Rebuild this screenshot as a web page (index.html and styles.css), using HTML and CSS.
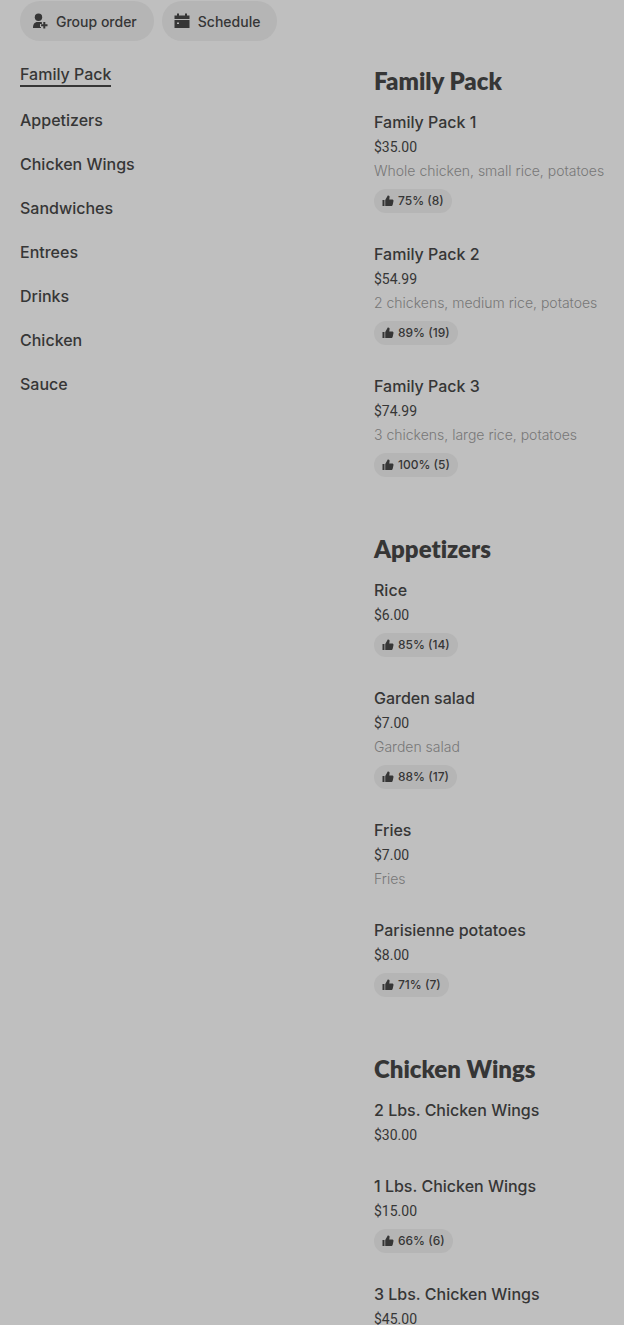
FILE: index.html
```html
<!DOCTYPE html>
<html lang="en">
<head>
  <meta charset="UTF-8" />
  <meta name="viewport" content="width=device-width, initial-scale=1.0"/>
  <title>Menu</title>
  <link rel="stylesheet" href="styles.css">
</head>
<body>
  <svg class="sprite" aria-hidden="true">
    <symbol id="thumb" viewBox="0 0 24 24">
      <path d="M1 10h4v12H1zM6.500 22V10l5-9h1c2 0 3 1.500 2.600 3.500L14.500 9H20c2 0 3 1 3 3l-1.500 7c-.5 2-1.500 3-3.500 3z"/>
    </symbol>
  </svg>

  <div class="page">
    <div class="actions">
      <button type="button" class="pill">
        <svg class="icon" viewBox="0 0 16 16" aria-hidden="true">
          <circle cx="6.500" cy="4.200" r="3.700"/>
          <path d="M1 15c0-3.800 1.500-6 4.500-6h3c.6 0 1 .1 1.400.3V11H8v3h1v1zM11.300 9h2v2.200h2.200v2h-2.200v2.200h-2v-2.200H9.100v-2h2.200z"/>
        </svg>
        Group order
      </button>
      <button type="button" class="pill">
        <svg class="icon" viewBox="0 0 16 16" aria-hidden="true">
          <path d="M3 .5h2v2h6v-2h2v2h2.500V6H.5V2.500H3zM.5 7h15v8H.5zM3 9.500v1.500h2V9.500z" fill-rule="evenodd"/>
        </svg>
        Schedule
      </button>
    </div>

    <div class="columns">
      <nav class="categories">
        <a href="#family-pack" class="active">Family Pack</a>
        <a href="#appetizers">Appetizers</a>
        <a href="#chicken-wings">Chicken Wings</a>
        <a href="#sandwiches">Sandwiches</a>
        <a href="#entrees">Entrees</a>
        <a href="#drinks">Drinks</a>
        <a href="#chicken">Chicken</a>
        <a href="#sauce">Sauce</a>
      </nav>

      <main class="menu">
        <section id="family-pack">
          <h2>Family Pack</h2>
          <div class="item">
            <h3>Family Pack 1</h3>
            <p class="price">$35.00</p>
            <p class="desc">Whole chicken, small rice, potatoes</p>
            <span class="badge"><svg><use href="#thumb"/></svg>75% (8)</span>
          </div>
          <div class="item">
            <h3>Family Pack 2</h3>
            <p class="price">$54.99</p>
            <p class="desc">2 chickens, medium rice, potatoes</p>
            <span class="badge"><svg><use href="#thumb"/></svg>89% (19)</span>
          </div>
          <div class="item">
            <h3>Family Pack 3</h3>
            <p class="price">$74.99</p>
            <p class="desc">3 chickens, large rice, potatoes</p>
            <span class="badge"><svg><use href="#thumb"/></svg>100% (5)</span>
          </div>
        </section>

        <section id="appetizers">
          <h2>Appetizers</h2>
          <div class="item">
            <h3>Rice</h3>
            <p class="price">$6.00</p>
            <span class="badge"><svg><use href="#thumb"/></svg>85% (14)</span>
          </div>
          <div class="item">
            <h3>Garden salad</h3>
            <p class="price">$7.00</p>
            <p class="desc">Garden salad</p>
            <span class="badge"><svg><use href="#thumb"/></svg>88% (17)</span>
          </div>
          <div class="item">
            <h3>Fries</h3>
            <p class="price">$7.00</p>
            <p class="desc">Fries</p>
          </div>
          <div class="item">
            <h3>Parisienne potatoes</h3>
            <p class="price">$8.00</p>
            <span class="badge"><svg><use href="#thumb"/></svg>71% (7)</span>
          </div>
        </section>

        <section id="chicken-wings">
          <h2>Chicken Wings</h2>
          <div class="item">
            <h3>2 Lbs. Chicken Wings</h3>
            <p class="price">$30.00</p>
          </div>
          <div class="item">
            <h3>1 Lbs. Chicken Wings</h3>
            <p class="price">$15.00</p>
            <span class="badge"><svg><use href="#thumb"/></svg>66% (6)</span>
          </div>
          <div class="item">
            <h3>3 Lbs. Chicken Wings</h3>
            <p class="price">$45.00</p>
          </div>
        </section>
      </main>
    </div>
  </div>
</body>
</html>
```
FILE: styles.css
```css
* {
  box-sizing: border-box;
}
body {
  margin: 0;
  background: #bfbfbf;
  color: #363636;
  font-family: Inter, "Liberation Sans", sans-serif;
}
h2, h3, p {
  margin: 0;
}
.sprite {
  display: none;
}
.page {
  height: 100vh;
  overflow: hidden;
  padding: 1px 20px 0;
}
.actions {
  display: flex;
  gap: 8px;
}
.pill {
  display: flex;
  align-items: center;
  gap: 8px;
  height: 40px;
  padding: 0 17px 0 12px;
  border: 0;
  border-radius: 20px;
  background: #b5b5b5;
  color: inherit;
  font-family: inherit;
  font-size: 14px;
  font-weight: 500;
}
.icon {
  width: 16px;
  height: 16px;
  fill: #363636;
}
.columns {
  display: grid;
  grid-template-columns: 1fr 230px;
  padding-top: 24px;
}
.categories {
  display: flex;
  flex-direction: column;
  align-items: flex-start;
  gap: 22px;
}
.categories a {
  color: inherit;
  text-decoration: none;
  font-size: 16px;
  font-weight: 500;
  line-height: 22px;
}
.categories .active {
  padding-bottom: 2px;
  line-height: 18px;
  border-bottom: 2px solid #363636;
}
.menu h2 {
  margin-bottom: 14px;
  font-family: Lato, sans-serif;
  font-size: 24px;
  font-weight: 800;
  font-variant-ligatures: none;
  line-height: 32px;
}
.menu section {
  margin-bottom: 26px;
}
.item {
  display: flex;
  flex-direction: column;
  align-items: flex-start;
  gap: 4px;
  padding-bottom: 30px;
}
.item h3 {
  font-size: 16px;
  font-weight: 500;
  line-height: 22px;
}
.price, .desc {
  font-size: 14px;
  line-height: 20px;
  white-space: nowrap;
}
.price {
  font-family: Roboto, sans-serif;
}
.desc {
  color: #777;
  font-weight: 300;
}
.badge {
  display: flex;
  align-items: center;
  gap: 4px;
  margin-top: 4px;
  padding: 0 8px;
  border-radius: 12px;
  background: #b5b5b5;
  font-size: 12px;
  font-weight: 500;
  line-height: 24px;
}
.badge svg {
  width: 12px;
  height: 12px;
  fill: #363636;
}
```
